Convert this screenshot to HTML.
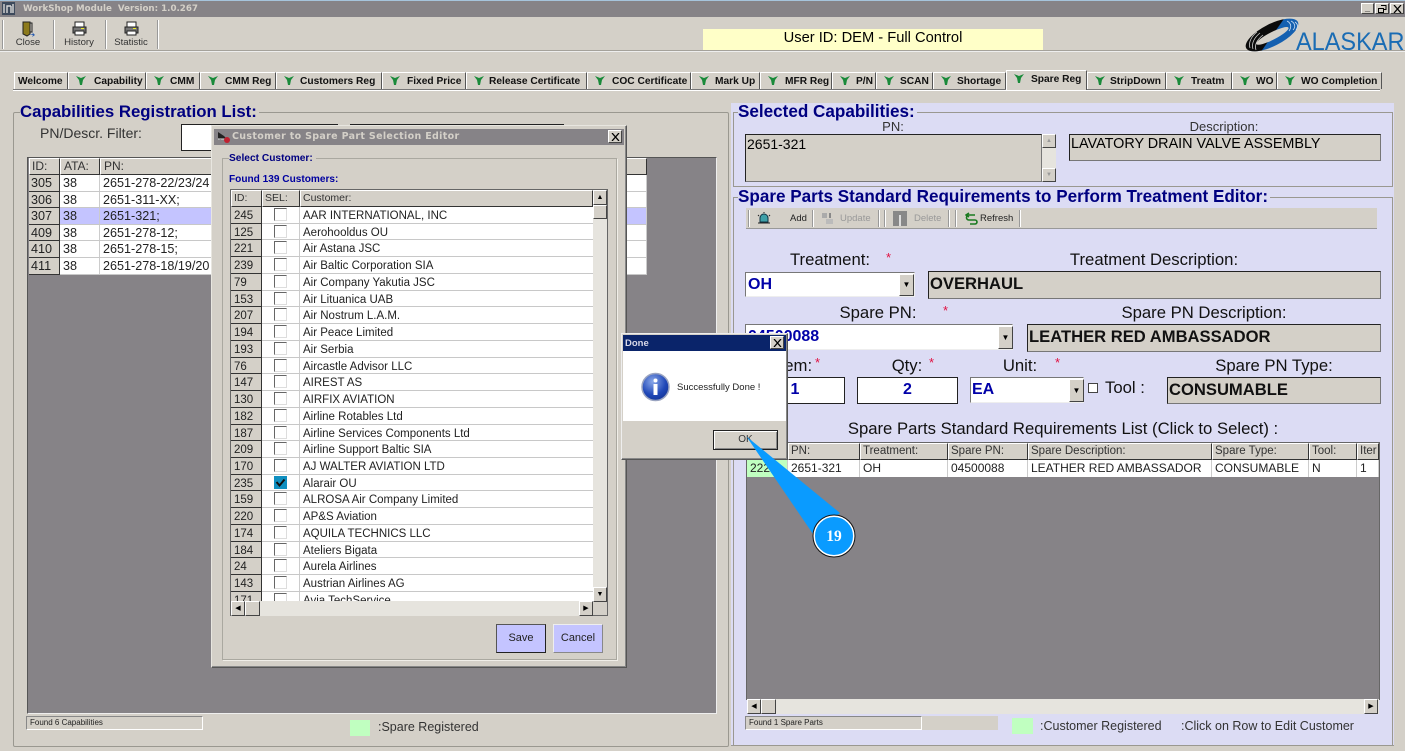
<!DOCTYPE html>
<html><head><meta charset="utf-8"><title>WorkShop Module</title>
<style>
html,body{margin:0;padding:0}
body{width:1405px;height:751px;overflow:hidden;position:relative;background:#d4d0c8;font-family:"Liberation Sans",sans-serif;color:#222}
.a{position:absolute;white-space:nowrap}
.c{text-align:center}
.box{position:absolute;box-sizing:border-box}
.tab{position:absolute;top:72px;height:17px;box-sizing:border-box;border-right:1px solid #555;border-top:1px solid #fff;border-left:1px solid #fff;font:bold 10.2px/17px "Liberation Sans",sans-serif;color:#111;white-space:nowrap;padding-left:21px;background:#d4d0c8}
.tab svg{position:absolute;left:6px;top:1px}
.leg{font-size:17.1px;font-weight:bold;color:#000080;background:#d4d0c8;line-height:18px}
.lav{background:#dcdcf4}
.lbl{font-size:16.7px;color:#111;line-height:20px}
.star{color:#e01040;font-size:13px;line-height:14px}
.in{position:absolute;box-sizing:border-box;background:#fff;border:1px solid #222;font:bold 16px/24px "Liberation Sans",sans-serif;color:#0000a8;padding-left:2px;overflow:hidden;white-space:nowrap}
.ro{position:absolute;box-sizing:border-box;background:#d4d0c8;border:1px solid #222;border-right-color:#777;border-bottom-color:#777;font:bold 16.6px/23px "Liberation Sans",sans-serif;color:#111;padding-left:1px;white-space:nowrap}
.btn{position:absolute;box-sizing:border-box;background:#d4d0c8;border:1px solid;border-color:#fff #444 #444 #fff;text-align:center;color:#111}
.sb{position:absolute;background:#e6e4de}
.rw{display:flex;box-sizing:border-box;height:16.74px;font-size:11.5px;line-height:16px;color:#222;border-bottom:1px solid #c8c8c8;background:#fff}
.rw>div{box-sizing:border-box;padding-left:3px;padding-top:1px;border-right:1px solid #ccc;white-space:nowrap;overflow:hidden}
.rw .id{background:#d4d0c8;border-right:1px solid #333;border-bottom:1px solid #333;height:16.74px}
.lt .rw{height:16.6px;font-size:12.6px;line-height:16px}
.lt .rw>div{padding-top:0}
.lt .rw .id{padding-left:2px;height:16.6px}
.hd{position:absolute;box-sizing:border-box;background:#d4d0c8;border:1px solid;border-color:#fff #333 #333 #fff;font-size:11.5px;line-height:15px;padding-left:2px;color:#333;white-space:nowrap;overflow:hidden}
.ck{display:block;width:13px;height:13px;box-sizing:border-box;margin:0 0 0 9px;border:1px solid;border-color:#666 #ddd #ddd #666;background:#fff}
.tb{position:absolute;font-size:9.5px;line-height:12px;color:#333}
.sep{position:absolute;width:1px;background:#999;border-right:1px solid #fff}
</style></head><body>

<!-- title bar -->
<div class="box" style="left:0;top:0;width:1405px;height:1px;background:#a6c4dc"></div>
<div class="box" style="left:0;top:1px;width:1405px;height:16px;background:#868387"></div>
<svg class="a" style="left:2px;top:2px" width="13" height="13"><rect width="13" height="13" fill="#3d4a5c"/><path d="M2 2v9M5 11V4h4M9 4v7M11 2v9" stroke="#d8d8d8" stroke-width="1.4" fill="none"/></svg>
<div class="a" style="left:23px;top:2px;font:bold 8.7px/14px 'DejaVu Sans',sans-serif;color:#d4d0c8">WorkShop Module&nbsp; Version: 1.0.267</div>
<div class="btn" style="left:1361px;top:3px;width:13px;height:11px;font:bold 9px/8px 'Liberation Sans';color:#000">_</div>
<div class="btn" style="left:1375px;top:3px;width:14px;height:11px"><svg style="display:block;margin:1px 0 0 2px" width="9" height="8"><path d="M3 .5h5v4H6M.5 3.500h5v4h-5z" fill="none" stroke="#000"/></svg></div>
<div class="btn" style="left:1390px;top:3px;width:14px;height:11px"><svg style="display:block;margin:1px 0 0 2px" width="9" height="8"><path d="M1 0l7 8M8 0l-7 8" stroke="#000" stroke-width="1.300"/></svg></div>

<!-- toolbar -->
<div class="box" style="left:0;top:50px;width:1405px;height:2px;background:#a5a29b;border-bottom:1px solid #eee"></div>
<div class="sep" style="left:2px;top:20px;height:29px"></div>
<div class="sep" style="left:53px;top:20px;height:29px"></div>
<div class="sep" style="left:105px;top:20px;height:29px"></div>
<div class="sep" style="left:157px;top:20px;height:29px"></div>
<svg class="a" style="left:21px;top:21px" width="14" height="16"><path d="M2 1h7v12l-3 2-4-2z" fill="#8c7a1c" stroke="#222"/><path d="M9 2h2v9H9" fill="none" stroke="#222"/><path d="M8 13h4l-1-2 3 3-3 2 1-2" fill="#2a5db0"/></svg>
<svg class="a" style="left:72px;top:21px" width="15" height="15"><rect x="3" y="1" width="9" height="5" fill="#fff" stroke="#222"/><rect x="1" y="6" width="13" height="6" fill="#777" stroke="#222"/><rect x="3" y="10" width="9" height="4" fill="#fff" stroke="#222"/><rect x="9" y="7" width="3" height="1" fill="#ee2"/></svg>
<svg class="a" style="left:124px;top:21px" width="15" height="15"><rect x="3" y="1" width="9" height="5" fill="#fff" stroke="#222"/><rect x="1" y="6" width="13" height="6" fill="#777" stroke="#222"/><rect x="3" y="10" width="9" height="4" fill="#fff" stroke="#222"/><rect x="9" y="7" width="3" height="1" fill="#ee2"/></svg>
<div class="a c" style="left:3px;width:50px;top:37px;font-size:9.6px;line-height:12px;color:#333">Close</div>
<div class="a c" style="left:54px;width:50px;top:37px;font-size:9.6px;line-height:12px;color:#333">History</div>
<div class="a c" style="left:106px;width:50px;top:37px;font-size:9.6px;line-height:12px;color:#333">Statistic</div>

<div class="box c" style="left:703px;top:29px;width:340px;height:21px;background:#ffffc8;font-size:14.7px;line-height:18px;color:#000">User ID: DEM - Full Control</div>

<!-- logo -->
<svg class="a" style="left:1245px;top:18px" width="56" height="34" viewBox="0 0 56 34">
<defs><linearGradient id="lg" gradientUnits="userSpaceOnUse" x1="18" y1="2" x2="34" y2="32"><stop offset=".52" stop-color="#0b0b0b"/><stop offset=".54" stop-color="#1560b0"/></linearGradient></defs>
<path transform="rotate(-27 27 17)" d="M-2 17a29 11 0 1 0 58 0a29 11 0 1 0-58 0zM9 18a18 3.800 0 1 0 36 0a18 3.800 0 1 0-36 0z" fill="url(#lg)" fill-rule="evenodd"/>
<path d="M5 30C3 24 7 18 12 14M8 31C6 25 10 19 15 15M11 32C9 26 13 21 18 17" stroke="#cfcfcf" stroke-width=".8" fill="none"/>
<path d="M42 3c4 2 5 6 2 10M46 3c4 2 5 6 2 9M50 4c3 2 3 5 1 8" stroke="#cfe0f4" stroke-width=".8" fill="none"/>
</svg>
<div class="a" style="left:1296px;top:27px;font-size:25px;line-height:30px;color:#1a6cb4;transform:scaleX(.94);transform-origin:0 0">ALASKAR</div>

<!-- tab strip -->
<div class="box" style="left:13px;top:89px;width:1367px;height:2px;background:#777;border-bottom:1px solid #fff"></div>
<div class="tab" style="left:14px;width:54px;padding-left:3px">Welcome</div>
<div class="tab" style="left:68px;width:78px;padding-left:25px"><svg width="12" height="12"><path d="M1 2l5 2 5-2-3 4-1 5H5L4 6z" fill="#1a8a3a"/></svg>Capability</div>
<div class="tab" style="left:146px;width:54px;padding-left:23px"><svg width="12" height="12"><path d="M1 2l5 2 5-2-3 4-1 5H5L4 6z" fill="#1a8a3a"/></svg>CMM</div>
<div class="tab" style="left:200px;width:76px;padding-left:24px"><svg width="12" height="12"><path d="M1 2l5 2 5-2-3 4-1 5H5L4 6z" fill="#1a8a3a"/></svg>CMM Reg</div>
<div class="tab" style="left:276px;width:106px;padding-left:23px"><svg width="12" height="12"><path d="M1 2l5 2 5-2-3 4-1 5H5L4 6z" fill="#1a8a3a"/></svg>Customers Reg</div>
<div class="tab" style="left:382px;width:84px;padding-left:24px"><svg width="12" height="12"><path d="M1 2l5 2 5-2-3 4-1 5H5L4 6z" fill="#1a8a3a"/></svg>Fixed Price</div>
<div class="tab" style="left:466px;width:121px;padding-left:22px"><svg width="12" height="12"><path d="M1 2l5 2 5-2-3 4-1 5H5L4 6z" fill="#1a8a3a"/></svg>Release Certificate</div>
<div class="tab" style="left:587px;width:104px;padding-left:24px"><svg width="12" height="12"><path d="M1 2l5 2 5-2-3 4-1 5H5L4 6z" fill="#1a8a3a"/></svg>COC Certificate</div>
<div class="tab" style="left:691px;width:69px;padding-left:23px"><svg width="12" height="12"><path d="M1 2l5 2 5-2-3 4-1 5H5L4 6z" fill="#1a8a3a"/></svg>Mark Up</div>
<div class="tab" style="left:760px;width:72px;padding-left:24px"><svg width="12" height="12"><path d="M1 2l5 2 5-2-3 4-1 5H5L4 6z" fill="#1a8a3a"/></svg>MFR Reg</div>
<div class="tab" style="left:832px;width:44px;padding-left:23px"><svg width="12" height="12"><path d="M1 2l5 2 5-2-3 4-1 5H5L4 6z" fill="#1a8a3a"/></svg>P/N</div>
<div class="tab" style="left:876px;width:57px;padding-left:23px"><svg width="12" height="12"><path d="M1 2l5 2 5-2-3 4-1 5H5L4 6z" fill="#1a8a3a"/></svg>SCAN</div>
<div class="tab" style="left:933px;width:73px;padding-left:23px"><svg width="12" height="12"><path d="M1 2l5 2 5-2-3 4-1 5H5L4 6z" fill="#1a8a3a"/></svg>Shortage</div>
<div class="tab" style="left:1006px;top:70px;height:20px;width:81px;padding-left:24px"><svg width="12" height="12"><path d="M1 2l5 2 5-2-3 4-1 5H5L4 6z" fill="#1a8a3a"/></svg>Spare Reg</div>
<div class="tab" style="left:1087px;width:79px;padding-left:22px"><svg width="12" height="12"><path d="M1 2l5 2 5-2-3 4-1 5H5L4 6z" fill="#1a8a3a"/></svg>StripDown</div>
<div class="tab" style="left:1166px;width:66px;padding-left:24px"><svg width="12" height="12"><path d="M1 2l5 2 5-2-3 4-1 5H5L4 6z" fill="#1a8a3a"/></svg>Treatm</div>
<div class="tab" style="left:1232px;width:45px;padding-left:23px"><svg width="12" height="12"><path d="M1 2l5 2 5-2-3 4-1 5H5L4 6z" fill="#1a8a3a"/></svg>WO</div>
<div class="tab" style="left:1277px;width:105px;padding-left:23px"><svg width="12" height="12"><path d="M1 2l5 2 5-2-3 4-1 5H5L4 6z" fill="#1a8a3a"/></svg>WO Completion</div>

<!-- left group -->
<div class="box" style="left:13px;top:112px;width:716px;height:635px;border:1px solid #9a9890;border-radius:2px"></div>
<div class="a leg" style="left:20px;top:103px;padding-right:2px;font-size:16.8px">Capabilities Registration List:</div>
<div class="a" style="left:40px;top:124px;font-size:14px;line-height:18px;color:#333">PN/Descr. Filter:</div>
<div class="box" style="left:181px;top:124px;width:157px;height:27px;background:#fff;border:1px solid #222"></div>
<div class="box" style="left:350px;top:124px;width:214px;height:27px;background:#fff;border:1px solid #222"></div>

<div class="box" style="left:27px;top:157px;width:690px;height:557px;background:#868387;border:1px solid #555;border-right-color:#eee;border-bottom-color:#eee"></div>
<div class="hd" style="left:29px;top:158px;width:31px;height:17px;font-size:12px">ID:</div>
<div class="hd" style="left:60px;top:158px;width:40px;height:17px;font-size:12px;padding-left:3px">ATA:</div>
<div class="hd" style="left:100px;top:158px;width:547px;height:17px;font-size:12px;padding-left:3px">PN:</div>
<div class="box lt" style="left:29px;top:175px;width:618px;height:100px;overflow:hidden">
<div class="rw"><div class="id" style="width:31px">305</div><div style="width:40px">38</div><div style="width:547px">2651-278-22/23/24</div></div>
<div class="rw"><div class="id" style="width:31px">306</div><div style="width:40px">38</div><div style="width:547px">2651-311-XX;</div></div>
<div class="rw" style="background:#c4c4ff"><div class="id" style="width:31px">307</div><div style="width:40px">38</div><div style="width:547px">2651-321;</div></div>
<div class="rw"><div class="id" style="width:31px">409</div><div style="width:40px">38</div><div style="width:547px">2651-278-12;</div></div>
<div class="rw"><div class="id" style="width:31px">410</div><div style="width:40px">38</div><div style="width:547px">2651-278-15;</div></div>
<div class="rw"><div class="id" style="width:31px">411</div><div style="width:40px">38</div><div style="width:547px">2651-278-18/19/20</div></div>
</div>
<div class="box" style="left:26px;top:716px;width:177px;height:14px;border:1px solid;border-color:#888 #fff #fff #888;font-size:8px;line-height:12px;padding-left:3px;color:#222">Found 6 Capabilities</div>
<div class="box" style="left:350px;top:720px;width:20px;height:16px;background:#c0ffc0"></div>
<div class="a" style="left:378px;top:719px;font-size:12.5px;line-height:16px;color:#333">:Spare Registered</div>

<!-- right panel -->
<div class="box lav" style="left:731px;top:103px;width:663px;height:643px;border-bottom:1px solid #999"></div>
<div class="box" style="left:733px;top:112px;width:660px;height:75px;border:1px solid #9a9890"></div>
<div class="a leg" style="left:738px;top:103px;background:#dcdcf4;padding-right:2px">Selected Capabilities:</div>
<div class="a c" style="left:873px;width:40px;top:119px;font-size:13px;line-height:15px;color:#333">PN:</div>
<div class="a c" style="left:1164px;width:120px;top:119px;font-size:13px;line-height:15px;color:#333">Description:</div>
<div class="ro" style="left:745px;top:134px;width:297px;height:48px;font:14px/19px 'Liberation Sans';padding-left:1px;color:#000">2651-321</div>
<div class="sb" style="left:1042px;top:134px;width:14px;height:48px"></div>
<div class="btn" style="left:1042px;top:134px;width:14px;height:14px;font-size:6px;line-height:12px;color:#999">▲</div>
<div class="btn" style="left:1042px;top:168px;width:14px;height:14px;font-size:6px;line-height:12px;color:#999">▼</div>
<div class="ro" style="left:1069px;top:134px;width:312px;height:27px;font:14.4px/19px 'Liberation Sans';padding-left:1px;color:#000">LAVATORY DRAIN VALVE ASSEMBLY</div>

<div class="box" style="left:733px;top:197px;width:660px;height:549px;border:1px solid #9a9890;border-right:1px solid #9a9890"></div>
<div class="a leg" style="left:738px;top:188px;background:#dcdcf4;padding-right:2px">Spare Parts Standard Requirements to Perform Treatment Editor:</div>

<!-- editor toolbar -->
<div class="box" style="left:746px;top:208px;width:631px;height:21px;background:#d4d0c8;border-bottom:1px solid #999"></div>
<div class="sep" style="left:748px;top:210px;height:17px"></div>
<svg class="a" style="left:757px;top:212px" width="14" height="13"><path d="M3 6a4 4 0 0 1 8 0v4H3z" fill="#3fa0a8" stroke="#134"/><path d="M1 11h12M7 0v1M1 3l1 1M13 3l-1 1" stroke="#222"/></svg>
<div class="tb" style="left:790px;top:213px;color:#222">Add</div>
<div class="sep" style="left:812px;top:210px;height:17px"></div>
<svg class="a" style="left:821px;top:212px" width="14" height="13"><rect x="1" y="1" width="5" height="5" fill="#aaa"/><rect x="5" y="7" width="7" height="5" fill="#bbb"/><path d="M9 1v5" stroke="#888" stroke-width="2"/></svg>
<div class="tb" style="left:840px;top:213px;color:#999">Update</div>
<div class="sep" style="left:878px;top:210px;height:17px"></div>
<div class="sep" style="left:884px;top:210px;height:17px"></div>
<div class="box" style="left:893px;top:211px;width:14px;height:15px;background:#888"></div>
<div class="box" style="left:899px;top:215px;width:2px;height:11px;background:#ddd"></div>
<div class="tb" style="left:914px;top:213px;color:#999">Delete</div>
<div class="sep" style="left:948px;top:210px;height:17px"></div>
<div class="sep" style="left:955px;top:210px;height:17px"></div>
<svg class="a" style="left:965px;top:212px" width="13" height="13"><path d="M10 3H4a2.500 2.500 0 0 0 0 5h6a2 2 0 0 1 0 4H5M4 1L1 3l3 2" fill="none" stroke="#1a7a20" stroke-width="1.600"/></svg>
<div class="tb" style="left:980px;top:213px;color:#222">Refresh</div>
<div class="sep" style="left:1019px;top:210px;height:17px"></div>

<!-- form -->
<div class="a lbl c" style="left:770px;width:120px;top:250px">Treatment:</div><div class="a star" style="left:886px;top:251px">*</div>
<div class="a lbl c" style="left:1034px;width:240px;top:250px">Treatment Description:</div>
<div class="in" style="left:745px;top:272px;width:170px;height:25px;border-color:#777 #eee #eee #777">OH</div>
<div class="btn" style="left:899px;top:274px;width:15px;height:22px;font-size:8px;line-height:20px;color:#000">▼</div>
<div class="ro" style="left:928px;top:271px;width:453px;height:28px">OVERHAUL</div>

<div class="a lbl c" style="left:818px;width:120px;top:303px">Spare PN:</div><div class="a star" style="left:943px;top:304px">*</div>
<div class="a lbl c" style="left:1084px;width:240px;top:303px">Spare PN Description:</div>
<div class="in" style="left:745px;top:324px;width:268px;height:26px;border-color:#777 #eee #eee #777">04500088</div>
<div class="btn" style="left:998px;top:326px;width:15px;height:23px;font-size:8px;line-height:21px;color:#000">▼</div>
<div class="ro" style="left:1027px;top:324px;width:354px;height:28px">LEATHER RED AMBASSADOR</div>

<div class="a lbl" style="left:775px;top:356px">Item:</div><div class="a star" style="left:815px;top:356px">*</div>
<div class="a lbl c" style="left:877px;width:60px;top:356px">Qty:</div><div class="a star" style="left:929px;top:356px">*</div>
<div class="a lbl c" style="left:990px;width:60px;top:356px">Unit:</div><div class="a star" style="left:1055px;top:356px">*</div>
<div class="a lbl c" style="left:1174px;width:200px;top:356px">Spare PN Type:</div>
<div class="in c" style="left:745px;top:377px;width:100px;height:27px;padding:0;text-align:center">1</div>
<div class="in c" style="left:857px;top:377px;width:101px;height:27px;padding:0;text-align:center">2</div>
<div class="in" style="left:970px;top:377px;width:114px;height:26px;border-color:#777 #eee #eee #777;padding-left:1px">EA</div>
<div class="btn" style="left:1069px;top:379px;width:15px;height:23px;font-size:8px;line-height:21px;color:#000">▼</div>
<div class="box" style="left:1088px;top:383px;width:10px;height:10px;background:#fff;border:1px solid #444"></div>
<div class="a lbl" style="left:1105px;top:378px">Tool :</div>
<div class="ro" style="left:1167px;top:377px;width:214px;height:27px">CONSUMABLE</div>

<div class="a lbl c" style="left:763px;width:600px;top:419px">Spare Parts Standard Requirements List (Click to Select) :</div>

<!-- list -->
<div class="box" style="left:746px;top:442px;width:634px;height:258px;background:#868387;border:1px solid #666"></div>
<div class="hd" style="left:747px;top:443px;width:41px;height:17px"></div>
<div class="hd" style="left:788px;top:443px;width:72px;height:17px">PN:</div>
<div class="hd" style="left:860px;top:443px;width:88px;height:17px">Treatment:</div>
<div class="hd" style="left:948px;top:443px;width:80px;height:17px">Spare PN:</div>
<div class="hd" style="left:1028px;top:443px;width:184px;height:17px">Spare Description:</div>
<div class="hd" style="left:1212px;top:443px;width:97px;height:17px">Spare Type:</div>
<div class="hd" style="left:1309px;top:443px;width:48px;height:17px">Tool:</div>
<div class="hd" style="left:1357px;top:443px;width:22px;height:17px">Iter</div>
<div class="box rw" style="position:absolute;left:747px;top:460px;width:632px;height:17px;font-size:12px;line-height:16px;border:0">
<div style="width:41px;background:#c0ffc0;padding-top:0">222</div><div style="width:72px;padding-top:0">2651-321</div><div style="width:88px;padding-top:0">OH</div><div style="width:80px;padding-top:0">04500088</div><div style="width:184px;padding-top:0">LEATHER RED AMBASSADOR</div><div style="width:97px;padding-top:0">CONSUMABLE</div><div style="width:48px;padding-top:0">N</div><div style="width:22px;padding-top:0">1</div></div>

<div class="sb" style="left:747px;top:699px;width:632px;height:15px"></div>
<div class="btn" style="left:747px;top:699px;width:14px;height:15px;font-size:7px;line-height:13px;color:#000">◀</div>
<div class="btn" style="left:761px;top:699px;width:15px;height:15px"></div>
<div class="btn" style="left:1364px;top:699px;width:14px;height:15px;font-size:7px;line-height:13px;color:#000">▶</div>

<div class="box" style="left:745px;top:716px;width:177px;height:14px;border:1px solid;border-color:#888 #fff #fff #888;background:#d4d0c8;font-size:8px;line-height:12px;padding-left:3px;color:#222">Found 1 Spare Parts</div>
<div class="box" style="left:922px;top:716px;width:76px;height:14px;background:#d4d0c8"></div>
<div class="box" style="left:1012px;top:718px;width:21px;height:16px;background:#c0ffc0"></div>
<div class="a" style="left:1040px;top:718px;font-size:12.5px;line-height:16px;color:#333">:Customer Registered</div>
<div class="a" style="left:1181px;top:718px;font-size:12.5px;line-height:16px;color:#333">:Click on Row to Edit Customer</div>

<!-- customer dialog -->
<div class="box" style="left:211px;top:125px;width:416px;height:543px;background:#d4d0c8;border:1px solid;border-color:#e8e6e0 #555 #555 #e8e6e0;box-shadow:inset -1px -1px 0 #888"></div>
<div class="box" style="left:214px;top:129px;width:410px;height:16px;background:#868387"></div>
<svg class="a" style="left:216px;top:130px" width="15" height="14"><path d="M2 2l6 4 2 2-6 2-2-2z" fill="#222"/><path d="M2 9h7" stroke="#ddd"/><circle cx="11" cy="10" r="3" fill="#c02030"/></svg>
<div class="a" style="left:232px;top:130px;font:bold 9.5px/14px 'DejaVu Sans',sans-serif;letter-spacing:.33px;color:#d4d0c8">Customer to Spare Part Selection Editor</div>
<div class="btn" style="left:608px;top:130px;width:14px;height:13px"><svg style="display:block;margin:2px 0 0 2px" width="9" height="8"><path d="M1 0l7 8M8 0l-7 8" stroke="#000" stroke-width="1.300"/></svg></div>

<div class="box" style="left:222px;top:158px;width:395px;height:502px;border:1px solid #aaa8a0;box-shadow:1px 1px 0 #f0eee8"></div>
<div class="a" style="left:229px;top:152px;background:#d4d0c8;padding-right:3px;font:bold 10.2px/13px 'Liberation Sans';color:#000080">Select Customer:</div>
<div class="a" style="left:229px;top:173px;font:bold 10.1px/13px 'Liberation Sans';color:#0000a0">Found 139 Customers:</div>

<div class="box" style="left:230px;top:189px;width:378px;height:427px;background:#fff;border:1px solid #666"></div>
<div class="hd" style="left:231px;top:190px;width:31px;height:17px;font-size:10.5px">ID:</div>
<div class="hd" style="left:262px;top:190px;width:38px;height:17px;font-size:10.5px">SEL:</div>
<div class="hd" style="left:300px;top:190px;width:293px;height:17px;font-size:10.5px">Customer:</div>
<div class="box" style="left:231px;top:207px;width:362px;height:394px;overflow:hidden">
<div class="rw"><div class="id" style="width:31px">245</div><div style="width:38px"><i class="ck"></i></div><div style="width:293px;border:0">AAR INTERNATIONAL, INC</div></div>
<div class="rw"><div class="id" style="width:31px">125</div><div style="width:38px"><i class="ck"></i></div><div style="width:293px;border:0">Aerohooldus OU</div></div>
<div class="rw"><div class="id" style="width:31px">221</div><div style="width:38px"><i class="ck"></i></div><div style="width:293px;border:0">Air Astana JSC</div></div>
<div class="rw"><div class="id" style="width:31px">239</div><div style="width:38px"><i class="ck"></i></div><div style="width:293px;border:0">Air Baltic Corporation SIA</div></div>
<div class="rw"><div class="id" style="width:31px">79</div><div style="width:38px"><i class="ck"></i></div><div style="width:293px;border:0">Air Company Yakutia JSC</div></div>
<div class="rw"><div class="id" style="width:31px">153</div><div style="width:38px"><i class="ck"></i></div><div style="width:293px;border:0">Air Lituanica UAB</div></div>
<div class="rw"><div class="id" style="width:31px">207</div><div style="width:38px"><i class="ck"></i></div><div style="width:293px;border:0">Air Nostrum L.A.M.</div></div>
<div class="rw"><div class="id" style="width:31px">194</div><div style="width:38px"><i class="ck"></i></div><div style="width:293px;border:0">Air Peace Limited</div></div>
<div class="rw"><div class="id" style="width:31px">193</div><div style="width:38px"><i class="ck"></i></div><div style="width:293px;border:0">Air Serbia</div></div>
<div class="rw"><div class="id" style="width:31px">76</div><div style="width:38px"><i class="ck"></i></div><div style="width:293px;border:0">Aircastle Advisor LLC</div></div>
<div class="rw"><div class="id" style="width:31px">147</div><div style="width:38px"><i class="ck"></i></div><div style="width:293px;border:0">AIREST AS</div></div>
<div class="rw"><div class="id" style="width:31px">130</div><div style="width:38px"><i class="ck"></i></div><div style="width:293px;border:0">AIRFIX AVIATION</div></div>
<div class="rw"><div class="id" style="width:31px">182</div><div style="width:38px"><i class="ck"></i></div><div style="width:293px;border:0">Airline Rotables Ltd</div></div>
<div class="rw"><div class="id" style="width:31px">187</div><div style="width:38px"><i class="ck"></i></div><div style="width:293px;border:0">Airline Services Components Ltd</div></div>
<div class="rw"><div class="id" style="width:31px">209</div><div style="width:38px"><i class="ck"></i></div><div style="width:293px;border:0">Airline Support Baltic SIA</div></div>
<div class="rw"><div class="id" style="width:31px">170</div><div style="width:38px"><i class="ck"></i></div><div style="width:293px;border:0">AJ WALTER AVIATION LTD</div></div>
<div class="rw"><div class="id" style="width:31px">235</div><div style="width:38px"><svg style="display:block;margin:0 0 0 9px" width="13" height="13"><rect width="13" height="13" fill="#0f8fc0"/><path d="M2.500 6l3 3.500 5-6" fill="none" stroke="#111" stroke-width="2"/></svg></div><div style="width:293px;border:0">Alarair OU</div></div>
<div class="rw"><div class="id" style="width:31px">159</div><div style="width:38px"><i class="ck"></i></div><div style="width:293px;border:0">ALROSA Air Company Limited</div></div>
<div class="rw"><div class="id" style="width:31px">220</div><div style="width:38px"><i class="ck"></i></div><div style="width:293px;border:0">AP&amp;S Aviation</div></div>
<div class="rw"><div class="id" style="width:31px">174</div><div style="width:38px"><i class="ck"></i></div><div style="width:293px;border:0">AQUILA TECHNICS LLC</div></div>
<div class="rw"><div class="id" style="width:31px">184</div><div style="width:38px"><i class="ck"></i></div><div style="width:293px;border:0">Ateliers Bigata</div></div>
<div class="rw"><div class="id" style="width:31px">24</div><div style="width:38px"><i class="ck"></i></div><div style="width:293px;border:0">Aurela Airlines</div></div>
<div class="rw"><div class="id" style="width:31px">143</div><div style="width:38px"><i class="ck"></i></div><div style="width:293px;border:0">Austrian Airlines AG</div></div>
<div class="rw"><div class="id" style="width:31px">171</div><div style="width:38px"><i class="ck"></i></div><div style="width:293px;border:0">Avia TechService</div></div>
</div>
<div class="sb" style="left:593px;top:190px;width:14px;height:411px"></div>
<div class="btn" style="left:593px;top:190px;width:14px;height:15px;font-size:7px;line-height:13px;color:#000">▲</div>
<div class="btn" style="left:593px;top:205px;width:14px;height:14px"></div>
<div class="btn" style="left:593px;top:587px;width:14px;height:15px;font-size:7px;line-height:13px;color:#000">▼</div>
<div class="sb" style="left:231px;top:601px;width:362px;height:15px"></div>
<div class="box" style="left:593px;top:602px;width:14px;height:13px;background:#d4d0c8"></div>
<div class="btn" style="left:231px;top:601px;width:14px;height:15px;font-size:7px;line-height:13px;color:#000">◀</div>
<div class="btn" style="left:245px;top:601px;width:15px;height:15px"></div>
<div class="btn" style="left:579px;top:601px;width:14px;height:15px;font-size:7px;line-height:13px;color:#000">▶</div>
<div class="btn" style="left:496px;top:624px;width:50px;height:29px;background:#c4c4ff;border:1px solid;border-color:#555 #222 #222 #555;font-size:11px;line-height:27px;color:#222">Save</div>
<div class="btn" style="left:553px;top:624px;width:50px;height:29px;background:#c4c4ff;border-color:#eee #888 #888 #eee;font-size:11px;line-height:27px;color:#222">Cancel</div>

<!-- done dialog -->
<div class="box" style="left:621px;top:333px;width:167px;height:127px;background:#d4d0c8;border:1px solid;border-color:#eee #555 #555 #eee;box-shadow:inset -1px -1px 0 #888"></div>
<div class="box" style="left:623px;top:335px;width:163px;height:16px;background:#0a246a"></div>
<div class="a" style="left:625px;top:337px;font:bold 9.5px/14px 'Liberation Sans';color:#d8d8e8">Done</div>
<div class="btn" style="left:770px;top:336px;width:14px;height:13px"><svg style="display:block;margin:2px 0 0 2px" width="9" height="8"><path d="M1 0l7 8M8 0l-7 8" stroke="#000" stroke-width="1.300"/></svg></div>
<div class="box" style="left:623px;top:351px;width:163px;height:70px;background:#fff"></div>
<svg class="a" style="left:641px;top:372px" width="29" height="30"><defs><radialGradient id="g" cx=".4" cy=".3" r=".8"><stop offset="0" stop-color="#8aa8e8"/><stop offset=".6" stop-color="#2048b8"/><stop offset="1" stop-color="#103090"/></radialGradient></defs><circle cx="14.500" cy="15" r="13.500" fill="url(#g)" stroke="#9aa4c0" stroke-width="1.500"/><circle cx="14.500" cy="8.500" r="2" fill="#fff"/><rect x="12.500" y="12" width="4" height="11" fill="#fff"/></svg>
<div class="a" style="left:677px;top:381px;font-size:9.5px;line-height:13px;color:#222">Successfully Done !</div>
<div class="box c" style="left:713px;top:430px;width:65px;height:20px;background:#d4d0c8;border:1px solid #222;box-shadow:inset 1px 1px 0 #fff,inset -1px -1px 0 #888;font-size:10px;line-height:18px;color:#333">OK</div>

<!-- callout -->
<svg class="a" style="left:740px;top:430px" width="120" height="130">
<path d="M6.500 6.500L100 83 73 104z" fill="#0a9bff"/>
<circle cx="94" cy="106" r="20" fill="#0a9bff" stroke="#fff" stroke-width="2"/>
<circle cx="94" cy="106" r="21" fill="none" stroke="#111" stroke-width="1"/>
<text x="94" y="111" text-anchor="middle" font-family="Liberation Serif, serif" font-weight="bold" font-size="15.500" fill="#fff">19</text>
</svg>
</body></html>
